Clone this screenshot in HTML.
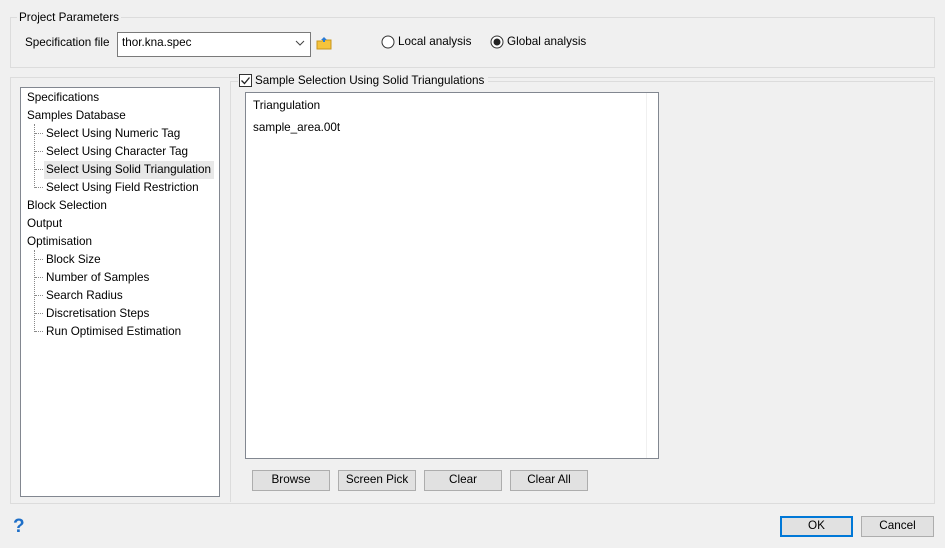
<!DOCTYPE html>
<html><head><style>
body{margin:0;width:945px;height:548px;background:#f0f0f0;font-family:"Liberation Sans",sans-serif;font-size:11.7px;color:#000;position:relative;overflow:hidden}
.a{position:absolute}
.btn{position:absolute;background:#e1e1e1;border:1px solid #adadad;box-sizing:border-box;text-align:center;line-height:18px;height:21px}
.t{position:absolute;white-space:nowrap;line-height:14px}
.d{position:absolute;border-top:1px dotted #888;width:8px}
</style></head><body>
<div class="a" style="left:10px;top:17px;width:923px;height:49px;border:1px solid #dcdcdc"></div>
<div class="t" style="left:17px;top:11px;background:#f0f0f0;padding:0 2px">Project Parameters</div>
<div class="t" style="left:25px;top:36px">Specification file</div>
<div class="a" style="left:117px;top:32px;width:192px;height:23px;border:1px solid #7a7a7a;background:#fff"></div>
<div class="t" style="left:122px;top:36px">thor.kna.spec</div>
<svg class="a" style="left:295px;top:39px" width="10" height="8"><path d="M1 2 L5 6 L9 2" stroke="#444" fill="none"/></svg>
<svg class="a" style="left:316px;top:36px" width="16" height="14"><path d="M1 5h5l1-1h8v9H1z" fill="#f5c33b" stroke="#c8961e"/><path d="M8 1l3 3h-2v2H7V4H5z" fill="#2a7bd4"/></svg>
<svg class="a" style="left:381px;top:35px" width="14" height="14"><circle cx="7" cy="7" r="6" fill="#fff" stroke="#333"/></svg>
<div class="t" style="left:398px;top:35px">Local analysis</div>
<svg class="a" style="left:490px;top:35px" width="14" height="14"><circle cx="7" cy="7" r="6" fill="#fff" stroke="#333"/><circle cx="7" cy="7" r="3.5" fill="#222"/></svg>
<div class="t" style="left:507px;top:35px">Global analysis</div>

<div class="a" style="left:10px;top:77px;width:923px;height:425px;border:1px solid #dcdcdc"></div>
<div class="a" style="left:230px;top:81px;width:0;height:421px;border-left:1px solid #dcdcdc"></div>
<div class="a" style="left:230px;top:81px;width:703px;border-top:1px solid #dcdcdc"></div>
<div class="a" style="left:20px;top:87px;width:198px;height:408px;border:1px solid #828790;background:#fff"></div>
<div class="a" style="left:34px;top:124px;height:64px;border-left:1px dotted #888"></div>
<div class="a" style="left:34px;top:250px;height:82px;border-left:1px dotted #888"></div>
<div class="a" style="left:44px;top:161px;width:170px;height:18px;background:#e8e8e8"></div>
<div class="t" style="left:27px;top:91px">Specifications</div>
<div class="t" style="left:27px;top:109px">Samples Database</div>
<div class="d" style="left:35px;top:133px"></div><div class="t" style="left:46px;top:127px">Select Using Numeric Tag</div>
<div class="d" style="left:35px;top:151px"></div><div class="t" style="left:46px;top:145px">Select Using Character Tag</div>
<div class="d" style="left:35px;top:169px"></div><div class="t" style="left:46px;top:163px">Select Using Solid Triangulation</div>
<div class="d" style="left:35px;top:187px"></div><div class="t" style="left:46px;top:181px">Select Using Field Restriction</div>
<div class="t" style="left:27px;top:199px">Block Selection</div>
<div class="t" style="left:27px;top:217px">Output</div>
<div class="t" style="left:27px;top:235px">Optimisation</div>
<div class="d" style="left:35px;top:259px"></div><div class="t" style="left:46px;top:253px">Block Size</div>
<div class="d" style="left:35px;top:277px"></div><div class="t" style="left:46px;top:271px">Number of Samples</div>
<div class="d" style="left:35px;top:295px"></div><div class="t" style="left:46px;top:289px">Search Radius</div>
<div class="d" style="left:35px;top:313px"></div><div class="t" style="left:46px;top:307px">Discretisation Steps</div>
<div class="d" style="left:35px;top:331px"></div><div class="t" style="left:46px;top:325px">Run Optimised Estimation</div>

<div class="a" style="left:238px;top:74px;width:250px;height:15px;background:#f0f0f0"></div>
<svg class="a" style="left:239px;top:74px" width="14" height="14"><rect x="0.5" y="0.5" width="12" height="12" fill="#fff" stroke="#333"/><path d="M2.5 6.5l3 3 5-6" stroke="#222" fill="none" stroke-width="1.3"/></svg>
<div class="t" style="left:255px;top:74px">Sample Selection Using Solid Triangulations</div>
<div class="a" style="left:245px;top:92px;width:412px;height:365px;border:1px solid #828790;background:#fff"></div>
<div class="a" style="left:646px;top:93px;height:365px;border-left:1px solid #f0f0f0"></div>
<div class="t" style="left:253px;top:99px">Triangulation</div>
<div class="t" style="left:253px;top:121px">sample_area.00t</div>
<div class="btn" style="left:252px;top:470px;width:78px">Browse</div>
<div class="btn" style="left:338px;top:470px;width:78px">Screen Pick</div>
<div class="btn" style="left:424px;top:470px;width:78px">Clear</div>
<div class="btn" style="left:510px;top:470px;width:78px">Clear All</div>
<div class="t" style="left:13px;top:517px;color:#1e6fc8;font-weight:bold;font-size:19px;line-height:20px">?</div>
<div class="btn" style="left:780px;top:516px;width:73px;border:2px solid #0078d7;line-height:16px">OK</div>
<div class="btn" style="left:861px;top:516px;width:73px">Cancel</div>
</body></html>
